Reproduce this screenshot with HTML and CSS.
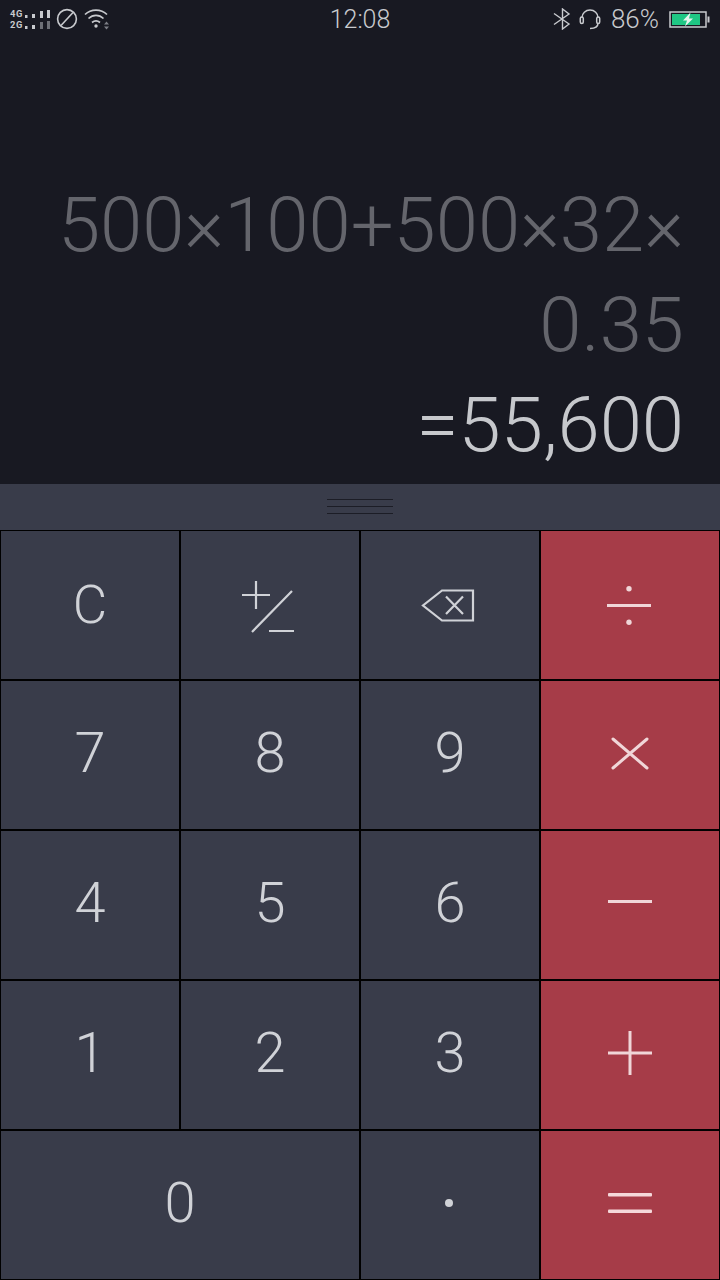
FILE: index.html
```html
<!DOCTYPE html>
<html>
<head>
    <title>Calculator</title>
    <link rel="stylesheet" href="styles.css">
</head>
<body>
    <div class="phone">
        <div class="status-bar">
            <div class="status-left">
                <div class="signal">
                    <div class="signal-row">
                        <span class="net">4G</span>
                        <svg width="26" height="8" viewBox="0 0 26 8"><rect x="0" y="5" width="2.500" height="3" fill="#c8cace"/><rect x="7" y="4" width="3" height="4" fill="#c8cace"/><rect x="15" y="1" width="3" height="7" fill="#c8cace"/><rect x="22" y="0" width="3" height="8" fill="#c8cace"/></svg>
                    </div>
                    <div class="signal-row">
                        <span class="net">2G</span>
                        <svg width="26" height="8" viewBox="0 0 26 8"><rect x="0" y="5" width="2.500" height="3" fill="#c8cace"/><rect x="7" y="4" width="3" height="4" fill="#c8cace"/><rect x="15" y="1" width="3" height="7" fill="#6d6f76"/><rect x="22" y="0" width="3" height="8" fill="#6d6f76"/></svg>
                    </div>
                </div>
                <svg class="dnd" width="22" height="22" viewBox="0 0 22 22" fill="none" stroke="#c8cace" stroke-width="1.600"><circle cx="11" cy="11" r="9.400"/><path d="M5 17.500 17 4.500"/></svg>
                <svg class="wifi" width="27" height="22" viewBox="0 0 27 22" fill="none" stroke="#c8cace" stroke-width="1.700">
                    <path d="M1 6.500C7 .6 17 .6 23 6.500"/>
                    <path d="M4.500 10.500C9 6.300 15 6.300 19.500 10.500"/>
                    <path d="M8 14.500C10.600 12.300 13.400 12.300 16 14.500"/>
                    <circle cx="12" cy="18" r="1.700" fill="#c8cace" stroke="none"/>
                    <path d="M20 16.500h5l-2.500-3zM20 18.500h5l-2.500 3z" fill="#7d7f86" stroke="none"/>
                </svg>
            </div>
            <div class="status-time">12:08</div>
            <div class="status-right">
                <svg class="bluetooth" width="18" height="22" viewBox="0 0 18 22" fill="none" stroke="#c8cace" stroke-width="1.400"><path d="M1 5.500 16 16 9.500 21V1L16 6 1 16.500"/></svg>
                <svg class="headset" width="22" height="21" viewBox="0 0 22 21" fill="none" stroke="#c8cace" stroke-width="1.500"><path d="M3 8.500a8 7.500 0 0 1 16 0"/><path d="M19 14c0 3-2 5.500-8 5.500"/><rect x="1.300" y="8" width="3" height="6.500" rx="1.500"/><rect x="17.700" y="8" width="3" height="6.500" rx="1.500"/></svg>
                <span class="battery-pct">86%</span>
                <svg width="41" height="17" viewBox="0 0 41 17"><rect x="1" y="1" width="36" height="15" fill="none" stroke="#c8cace" stroke-width="1.500"/><rect x="3" y="3" width="28" height="11" fill="#1fc784"/><path d="M21.500 1.500 14 9.500H18L16 15.500 24 7.500H20z" fill="#e8f5ee"/><rect x="38.500" y="5.500" width="2" height="6" fill="#c8cace"/></svg>
            </div>
        </div>
        <div class="display">
            <div class="expr">500×100+500×32×</div>
            <div class="expr">0.35</div>
            <div class="result">=55,600</div>
        </div>
        <div class="handle">
            <div class="handle-lines"><span></span><span></span><span></span></div>
        </div>
        <div class="keys">
            <div class="key key-top key-c">C</div>
            <div class="key key-top">
                <svg class="icon-sign" width="54" height="54" viewBox="0 0 54 54" fill="none" stroke="#d0d2d7" stroke-width="2.200"><path d="M1 15h28M15 1v28M11 52 51 11M28 51h25"/></svg>
            </div>
            <div class="key key-top">
                <svg class="icon-back" width="54" height="33" viewBox="0 0 54 33" fill="none" stroke="#d0d2d7" stroke-width="2.200"><path d="M21 1.500H52V31.500H21L2 16.500Z"/><path d="M25 7.500 42 25M42 7.500 25 25"/></svg>
            </div>
            <div class="key key-top op">
                <svg class="icon-div" width="44" height="39" viewBox="0 0 44 39" fill="#f0d6d8"><rect x="0" y="18" width="44" height="3"/><circle cx="22" cy="2.700" r="2.700"/><circle cx="22" cy="36.300" r="2.700"/></svg>
            </div>
            <div class="key">7</div>
            <div class="key">8</div>
            <div class="key">9</div>
            <div class="key op">
                <svg width="38" height="33" viewBox="0 0 38 33" fill="none" stroke="#f0d6d8" stroke-width="3" stroke-linecap="round"><path d="M2 2 36 31M36 2 2 31"/></svg>
            </div>
            <div class="key">4</div>
            <div class="key">5</div>
            <div class="key">6</div>
            <div class="key op">
                <svg class="icon-minus" width="44" height="3" viewBox="0 0 44 3" fill="#f0d6d8"><rect width="44" height="3"/></svg>
            </div>
            <div class="key">1</div>
            <div class="key">2</div>
            <div class="key">3</div>
            <div class="key op">
                <svg width="44" height="44" viewBox="0 0 44 44" fill="#f0d6d8"><rect x="0" y="20.500" width="44" height="3"/><rect x="20.500" y="0" width="3" height="44"/></svg>
            </div>
            <div class="key key-wide">0</div>
            <div class="key">
                <svg class="icon-dot" width="10" height="10" viewBox="0 0 10 10" fill="#d0d2d7"><circle cx="5" cy="5" r="4"/></svg>
            </div>
            <div class="key op">
                <svg width="44" height="20" viewBox="0 0 44 20" fill="#f5d8da"><rect y="0" width="44" height="3.500" rx="1"/><rect y="16.500" width="44" height="3.500" rx="1"/></svg>
            </div>
        </div>
    </div>
</body>
</html>
```

FILE: styles.css
```css
html, body {
    margin: 0;
    padding: 0;
}
body {
    background-color: #181922;
    font-family: Roboto, "Noto Sans", sans-serif;
    font-weight: 300;
}
.phone {
    display: flex;
    flex-direction: column;
    width: 720px;
    height: 1280px;
    overflow: hidden;
}
.status-bar {
    display: grid;
    grid-template-columns: 1fr auto 1fr;
    align-items: center;
    height: 38px;
    padding: 0 10px;
    color: #c8cace;
}
.status-left {
    display: flex;
    align-items: center;
    gap: 6px;
}
.status-right {
    display: flex;
    align-items: center;
    justify-content: flex-end;
}
.signal {
    display: flex;
    flex-direction: column;
    gap: 3px;
    margin-right: -1px;
}
.signal-row {
    display: flex;
    align-items: flex-end;
    height: 8px;
}
.net {
    width: 15px;
    font-size: 9.400px;
    line-height: 8px;
    font-weight: 700;
    letter-spacing: 0.5px;
}
.status-time {
    font-size: 25px;
}
.bluetooth {
    margin-right: 8px;
}
.headset {
    margin-right: 10px;
}
.battery-pct {
    margin-right: 10px;
    font-size: 26px;
}
.display {
    display: flex;
    flex-direction: column;
    align-items: flex-end;
    justify-content: flex-end;
    height: 446px;
    box-sizing: border-box;
    padding: 0 36px 9px 0;
    background-color: #181922;
}
.expr, .result {
    height: 100px;
    font-size: 76px;
    line-height: 100px;
    white-space: nowrap;
}
.expr {
    color: #64656c;
}
.result {
    color: #c6c8cc;
}
.handle {
    display: flex;
    align-items: center;
    justify-content: center;
    height: 45px;
    padding-bottom: 1px;
    background-color: #393c4a;
}
.handle-lines {
    display: flex;
    flex-direction: column;
    gap: 6px;
    width: 66px;
}
.handle-lines span {
    height: 1px;
    background-color: #1c1d26;
}
.keys {
    display: grid;
    grid-template-columns: repeat(4, 180px);
    grid-auto-rows: 150px;
}
.key {
    display: flex;
    align-items: center;
    justify-content: center;
    box-sizing: border-box;
    border: 1px solid #000;
    padding-bottom: 4px;
    background-color: #393c4a;
    color: #d0d2d7;
    font-size: 56px;
}
.key-top {
    padding-bottom: 0;
}
.key-c {
    font-size: 53px;
}
.key-wide {
    grid-column: span 2;
}
.op {
    background-color: #a63c48;
}
.icon-sign {
    margin: 3px 4px 0 0;
}
.icon-back {
    margin-right: 4px;
}
.icon-div {
    margin-right: 2px;
}
.icon-minus {
    margin-bottom: 3px;
}
.icon-dot {
    margin-right: 2px;
}
```
